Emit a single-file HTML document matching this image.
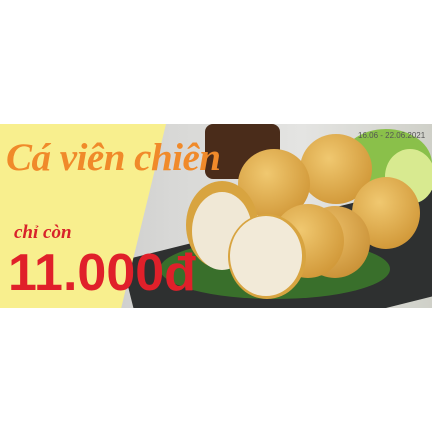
<!DOCTYPE html><html><head><style>
body{margin:0;width:432px;height:432px;background:#fff;position:relative;overflow:hidden;font-family:"Liberation Sans",sans-serif}
.b{position:absolute;left:0;top:124px;width:432px;height:184px;overflow:hidden;background:linear-gradient(90deg,#bdbdbd,#d8d8d6 40%,#e4e4e2 70%,#cfd0c8)}
.c{position:absolute;border-radius:50%}
</style></head><body>
<div class="b">
<div style="position:absolute;left:130px;top:95px;width:330px;height:110px;background:#2e3030;transform:rotate(-14deg);border-radius:6px"></div>
<div class="c" style="left:205px;top:0;width:75px;height:55px;background:#4a2c1a;border-radius:8px"></div>
<div class="c" style="left:340px;top:5px;width:92px;height:70px;background:#8ac04a"></div>
<div class="c" style="left:385px;top:25px;width:50px;height:55px;background:#d8ea90"></div>
<div class="c" style="left:160px;top:115px;width:230px;height:60px;background:#3e8a2a;opacity:.7"></div>
<div class="c" style="left:300px;top:10px;width:72px;height:70px;background:radial-gradient(circle at 40% 35%,#f0c870,#c88a28)"></div>
<div class="c" style="left:238px;top:25px;width:72px;height:70px;background:radial-gradient(circle at 40% 35%,#f0c870,#c88a28)"></div>
<div class="c" style="left:352px;top:53px;width:68px;height:72px;background:radial-gradient(circle at 40% 35%,#f0c870,#c88a28)"></div>
<div class="c" style="left:300px;top:82px;width:70px;height:72px;background:radial-gradient(circle at 40% 35%,#ecc06a,#c08428)"></div>
<div class="c" style="left:272px;top:80px;width:72px;height:74px;background:radial-gradient(circle at 40% 35%,#f0c870,#c88a28)"></div>
<div class="c" style="left:186px;top:57px;width:72px;height:88px;background:#d8a440"></div>
<div class="c" style="left:192px;top:68px;width:60px;height:78px;background:#f0e8d6"></div>
<div class="c" style="left:228px;top:90px;width:78px;height:85px;background:#d8a440"></div>
<div class="c" style="left:230px;top:92px;width:72px;height:80px;background:#f2ead8"></div>
<div style="position:absolute;left:0;top:0;width:166px;height:184px;background:#f8ef8e;clip-path:polygon(0 0,100% 0,73% 100%,0 100%)"></div>
<div style="position:absolute;left:358px;top:7px;font-size:8px;color:#555">16.06 - 22.06.2021</div>
<div style="position:absolute;left:6px;top:11px;font-family:'Liberation Serif',serif;font-style:italic;font-weight:bold;font-size:39px;color:#f08a2a;white-space:nowrap;letter-spacing:-0.5px">Cá viên chiên</div>
<div style="position:absolute;left:14px;top:98px;font-family:'Liberation Serif',serif;font-style:italic;font-weight:bold;font-size:19px;color:#d8222a">chỉ còn</div>
<div style="position:absolute;left:8px;top:119px;font-weight:900;font-size:52px;color:#e0202a;letter-spacing:0px;white-space:nowrap">11.000đ</div>
</div>
</body></html>
